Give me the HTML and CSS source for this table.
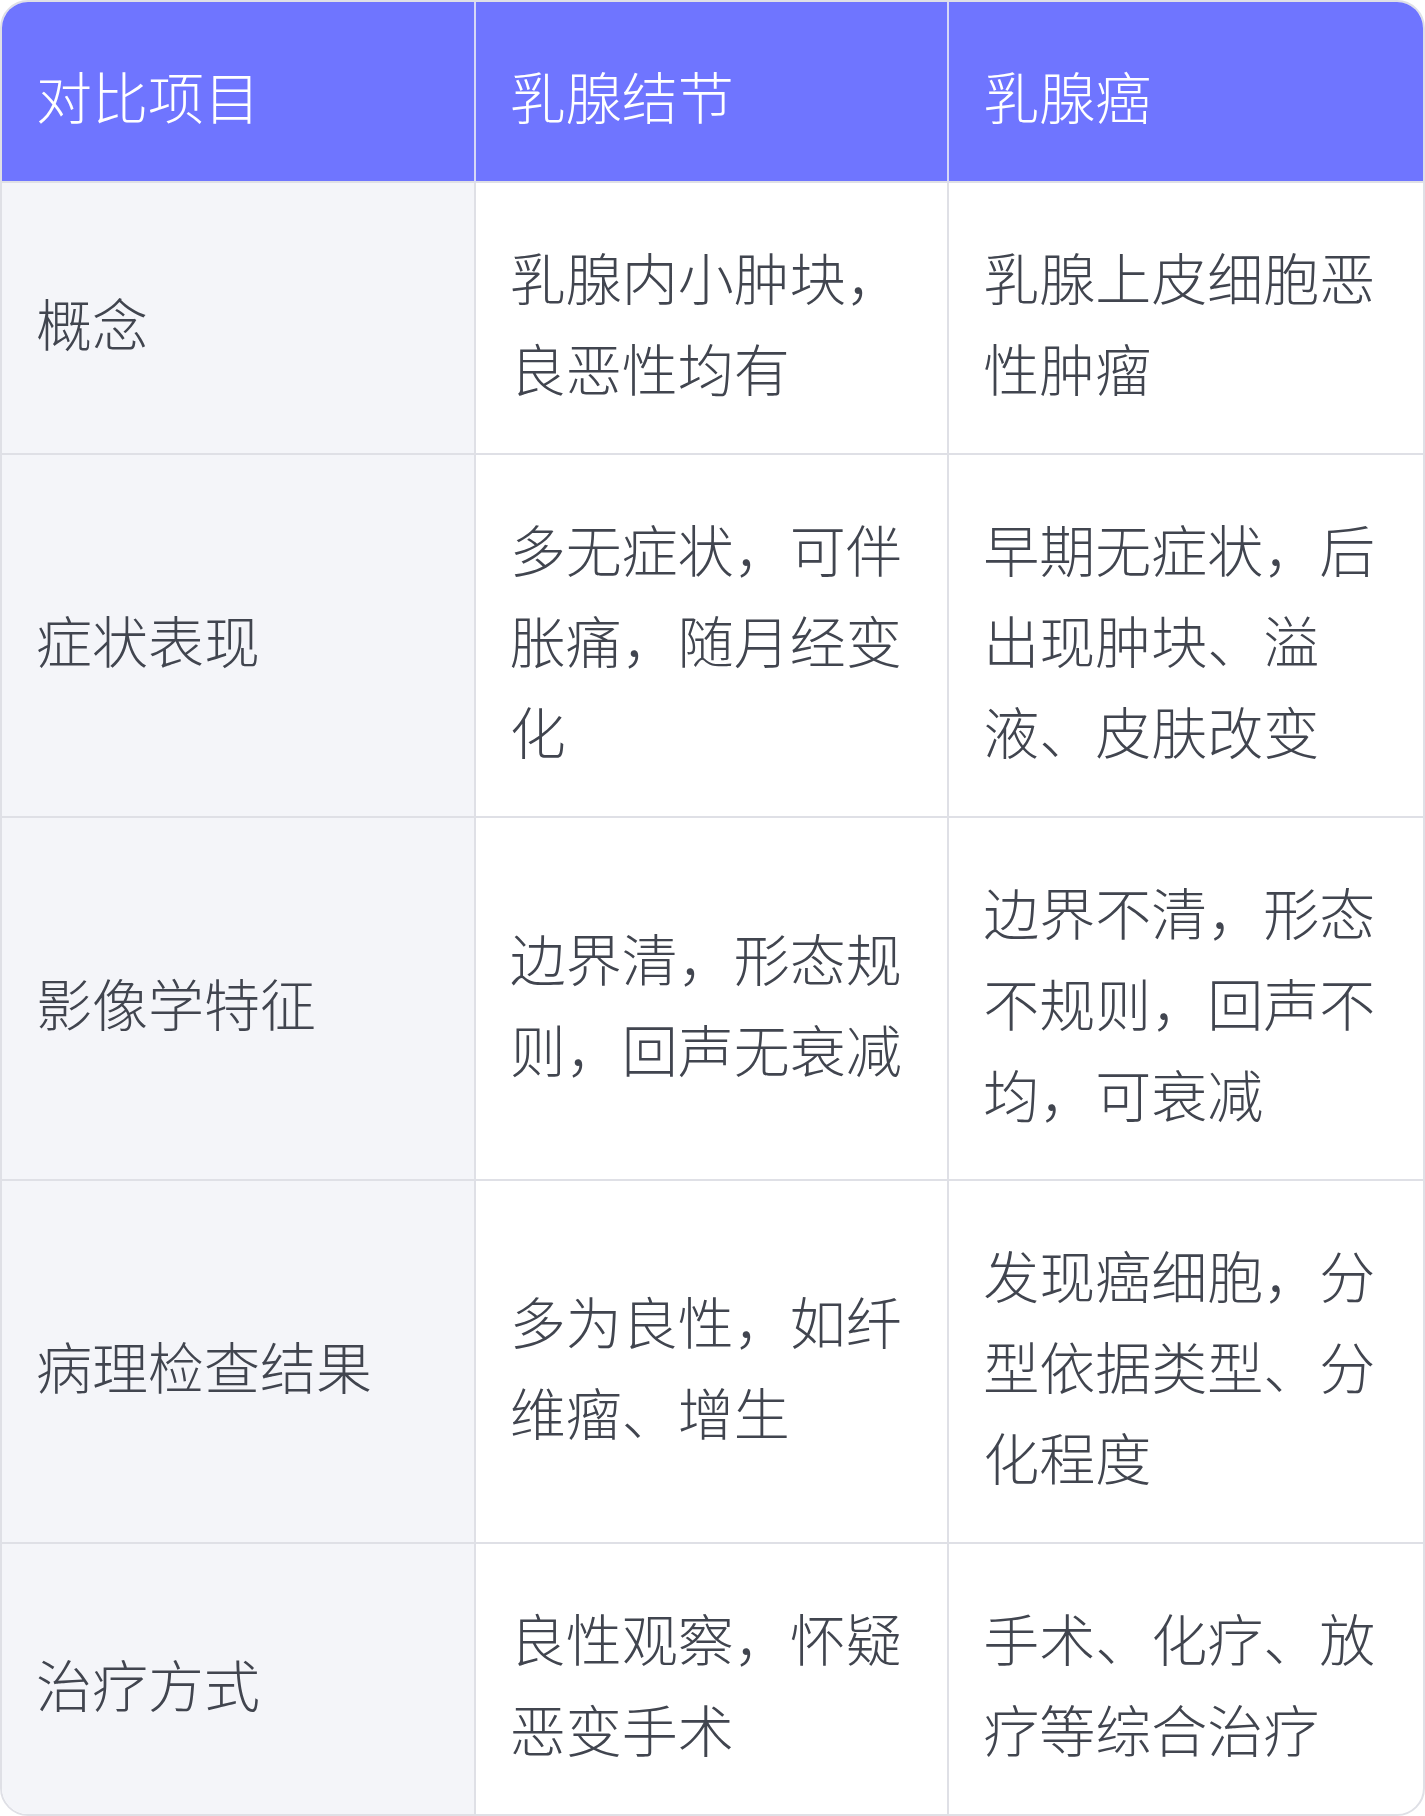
FILE: index.html
```html
<!DOCTYPE html>
<html lang="zh-CN">
<head>
<meta charset="utf-8">
<title>乳腺结节与乳腺癌对比</title>
<link rel="stylesheet" href="styles.css">
</head>
<body>
<div class="card">
  <table class="compare">
    <colgroup>
      <col class="c1"><col class="c2"><col class="c3">
    </colgroup>
    <thead>
      <tr>
        <th>对比项目</th>
        <th>乳腺结节</th>
        <th>乳腺癌</th>
      </tr>
    </thead>
    <tbody>
      <tr>
        <td class="label">概念</td>
        <td>乳腺内小肿块，良恶性均有</td>
        <td>乳腺上皮细胞恶性肿瘤</td>
      </tr>
      <tr>
        <td class="label">症状表现</td>
        <td>多无症状，可伴胀痛，随月经变化</td>
        <td>早期无症状，后出现肿块、溢液、皮肤改变</td>
      </tr>
      <tr>
        <td class="label">影像学特征</td>
        <td>边界清，形态规则，回声无衰减</td>
        <td>边界不清，形态不规则，回声不均，可衰减</td>
      </tr>
      <tr>
        <td class="label">病理检查结果</td>
        <td>多为良性，如纤维瘤、增生</td>
        <td>发现癌细胞，分型依据类型、分化程度</td>
      </tr>
      <tr>
        <td class="label">治疗方式</td>
        <td>良性观察，怀疑恶变手术</td>
        <td>手术、化疗、放疗等综合治疗</td>
      </tr>
    </tbody>
  </table>
</div>
</body>
</html>
```

FILE: styles.css
```css
* { box-sizing: border-box; }

html, body {
  margin: 0;
  padding: 0;
  background: #ffffff;
}

body {
  font-family: "Noto Sans CJK SC", "Noto Sans", sans-serif;
  color: #41454f;
}

.card {
  width: 1425px;
  border: 2px solid #dfe0e6;
  border-radius: 28px;
  overflow: hidden;
  background: #ffffff;
}

.compare {
  width: 100%;
  table-layout: fixed;
  border-collapse: separate;
  border-spacing: 0;
}

.compare th,
.compare td {
  font-size: 56px;
  line-height: 91px;
  font-weight: 300;
  text-align: left;
  vertical-align: middle;
  padding: 47px 34px 41px;
  border-right: 2px solid #dfe0e6;
  border-bottom: 2px solid #dfe0e6;
}

.compare th {
  background: #6f75ff;
  color: #ffffff;
  border-right-color: #d6d7f7;
  border-bottom-color: #dfe0e6;
}

.compare th:last-child,
.compare td:last-child {
  border-right: none;
}

.compare tbody tr:last-child td {
  border-bottom: none;
}

.compare td.label {
  background: #f4f5f9;
}
```
